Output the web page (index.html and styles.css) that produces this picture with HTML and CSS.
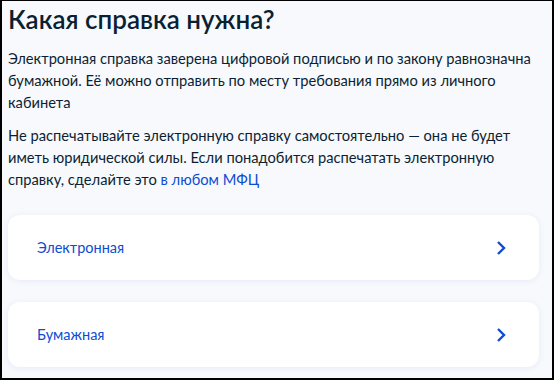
FILE: index.html
```html
<!DOCTYPE html>
<html>
	<head>
		<meta charset="utf-8">
		<title>Какая справка нужна?</title>
		<link rel="stylesheet" href="styles.css">
	</head>
	<body>
		<section class="page">
			<h1 class="title">Какая справка нужна?</h1>

			<p class="text">Электронная справка заверена цифровой подписью и по закону равнозначна бумажной. Её можно отправить по месту требования прямо из личного кабинета</p>
			<p class="text">Не распечатывайте электронную справку самостоятельно — она не будет иметь юридической силы. Если понадобится распечатать электронную справку, сделайте это <a href="#" class="link">в любом МФЦ</a></p>

			<div class="options">
				<a href="#" class="option">
					<span>Электронная</span>
					<svg class="chevron" width="10" height="16" viewBox="0 0 10 16"><path d="M2 2l6 6-6 6" fill="none" stroke="#0d4cd3" stroke-width="2.4"/></svg>
				</a>
				<a href="#" class="option">
					<span>Бумажная</span>
					<svg class="chevron" width="10" height="16" viewBox="0 0 10 16"><path d="M2 2l6 6-6 6" fill="none" stroke="#0d4cd3" stroke-width="2.4"/></svg>
				</a>
			</div>
		</section>
	</body>
</html>
```

FILE: styles.css
```css
html,
body {
	margin: 0;
	height: 100%;
}

body {
	font-family: Lato, "Noto Sans", sans-serif;
	color: #0b1f33;
	background-color: #000;
}

.page {
	box-sizing: border-box;
	height: 380px;
	border: 2px solid #000;
	border-top-width: 1px;
	background-color: #f8f9fd;
	padding: 0 13px 0 6px;
	overflow: hidden;
}

.title {
	margin: 0;
	padding-top: 2px;
	font-size: 26px;
	line-height: 32px;
	font-weight: 600;
}

.text {
	margin: 12px -8px 0 0;
	font-size: 14.7px;
	line-height: 22px;
}

.text + .text {
	margin-top: 11px;
}

.link {
	color: #0d4cd3;
	text-decoration: none;
}

.options {
	margin-top: 25px;
	display: flex;
	flex-direction: column;
	gap: 22px;
}

.option {
	display: flex;
	align-items: center;
	justify-content: space-between;
	height: 65px;
	padding: 0 33px 0 29px;
	background-color: #fff;
	border-radius: 12px;
	box-shadow: 0 1px 6px rgba(40, 70, 160, 0.08);
	color: #0d4cd3;
	font-size: 14.5px;
	text-decoration: none;
}
```
